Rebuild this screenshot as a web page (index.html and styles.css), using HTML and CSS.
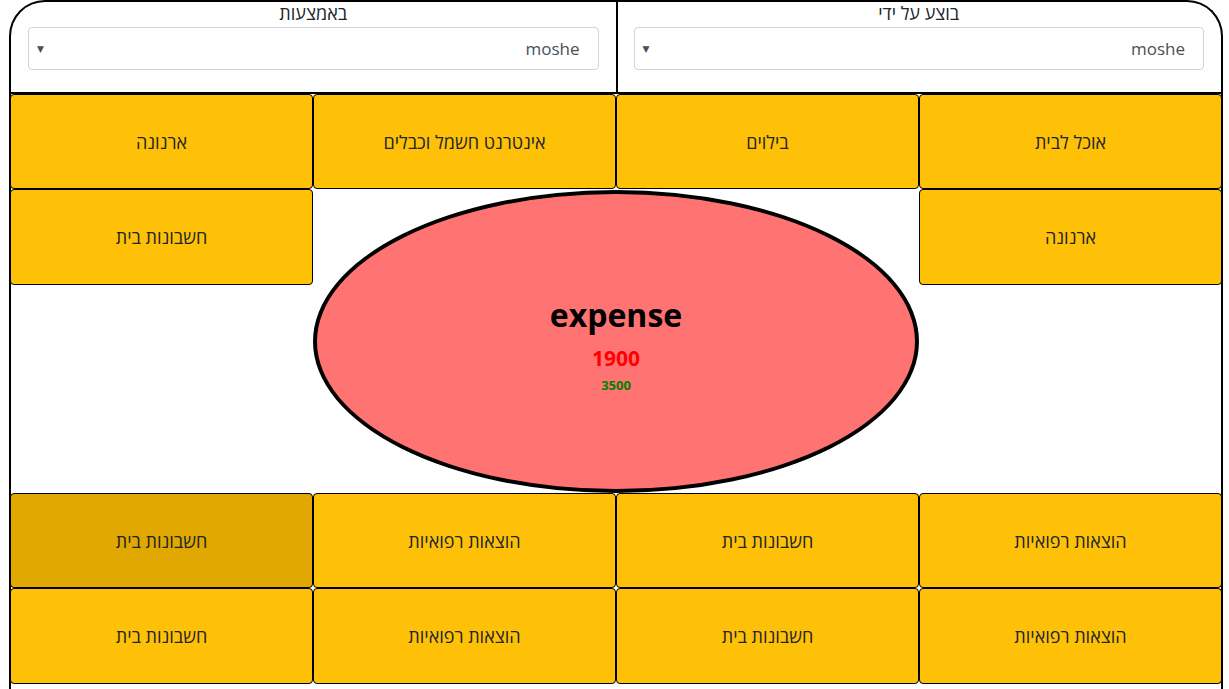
FILE: index.html
```html
<!DOCTYPE html>
<html lang="he" dir="rtl">
<head>
<meta charset="utf-8">
<title>expense</title>
<link rel="stylesheet" href="styles.css">
</head>
<body>
<div class="frame">
  <div class="header">
    <div class="field">
      <div class="field-label">בוצע על ידי</div>
      <div class="select"><span class="select-value">moshe</span><span class="select-arrow">▼</span></div>
    </div>
    <div class="field field-left">
      <div class="field-label">באמצעות</div>
      <div class="select"><span class="select-value">moshe</span><span class="select-arrow">▼</span></div>
    </div>
  </div>
  <div class="board">
    <div class="btn r1">אוכל לבית</div>
    <div class="btn r1">בילוים</div>
    <div class="btn r1">אינטרנט חשמל וכבלים</div>
    <div class="btn r1">ארנונה</div>

    <div class="btn side-right">ארנונה</div>
    <div class="center">
      <div class="oval">
        <div class="oval-title">expense</div>
        <div class="oval-spent">1900</div>
        <div class="oval-budget">3500</div>
      </div>
    </div>
    <div class="btn side-left">חשבונות בית</div>

    <div class="btn r4">הוצאות רפואיות</div>
    <div class="btn r4">חשבונות בית</div>
    <div class="btn r4">הוצאות רפואיות</div>
    <div class="btn r4 btn-active">חשבונות בית</div>

    <div class="btn r5">הוצאות רפואיות</div>
    <div class="btn r5">חשבונות בית</div>
    <div class="btn r5">הוצאות רפואיות</div>
    <div class="btn r5">חשבונות בית</div>
  </div>
</div>
</body>
</html>
```

FILE: styles.css
```css
html, body {
  margin: 0;
  padding: 0;
  background: #ffffff;
}

body {
  width: 1229px;
  height: 689px;
  overflow: hidden;
  font-family: "Open Sans", "DejaVu Sans", sans-serif;
  color: #212529;
}

.frame {
  box-sizing: border-box;
  margin-right: 6px;
  width: 1214px;
  height: 689px;
  border: 2px solid #000;
  border-bottom: none;
  border-radius: 36px 36px 0 0;
  display: flex;
  flex-direction: column;
}

.header {
  display: flex;
  height: 92px;
  border-bottom: 2px solid #000;
  margin-top: -2px;
}

.field {
  flex: 1;
  display: flex;
  flex-direction: column;
  align-items: stretch;
  padding: 0 17px 0 16px;
}

.field-left {
  border-right: 2px solid #000;
  padding: 0 17px 0 17px;
}

.field-label {
  text-align: center;
  font-size: 18px;
  line-height: 24px;
  height: 26px;
  padding-top: 1px;
}

.select {
  box-sizing: border-box;
  height: 43px;
  border: 1px solid #ced4da;
  border-radius: 4px;
  display: flex;
  align-items: center;
  justify-content: space-between;
  padding: 0 18px 0 8px;
  color: #495057;
}

.select-value {
  font-size: 17px;
}

.select-arrow {
  font-size: 9px;
  color: #495057;
  line-height: 1;
}

.board {
  display: grid;
  grid-template-columns: repeat(4, 1fr);
  grid-template-rows: 95px 96px 208px 95px 96px;
  margin-right: -1px;
  margin-left: -1px;
}

.btn {
  background: #ffc107;
  border: 1px solid #000;
  border-radius: 4px;
  display: flex;
  align-items: center;
  justify-content: center;
  font-size: 18px;
  color: #212529;
}

.btn-active {
  background: #e0a800;
}

.r1 { grid-row: 1; }
.r4 { grid-row: 4; }
.r5 { grid-row: 5; }

.side-right {
  grid-row: 2;
  grid-column: 1;
}

.side-left {
  grid-row: 2;
  grid-column: 4;
}

.center {
  grid-column: 2 / span 2;
  grid-row: 2 / span 2;
  display: flex;
  padding: 1px 0 0;
}

.oval {
  flex: 1;
  box-sizing: border-box;
  border: 4px solid #000;
  border-radius: 50%;
  background: #ff7373;
  display: flex;
  flex-direction: column;
  align-items: center;
  justify-content: center;
  padding-top: 6px;
}

.oval-title {
  font-size: 32px;
  font-weight: 700;
  color: #000;
  line-height: 40px;
}

.oval-spent {
  font-size: 21px;
  font-weight: 700;
  color: #ff0000;
  line-height: 28px;
  margin-top: 9px;
}

.oval-budget {
  font-size: 13px;
  font-weight: 700;
  color: #008000;
  line-height: 18px;
  margin-top: 4px;
}
```
